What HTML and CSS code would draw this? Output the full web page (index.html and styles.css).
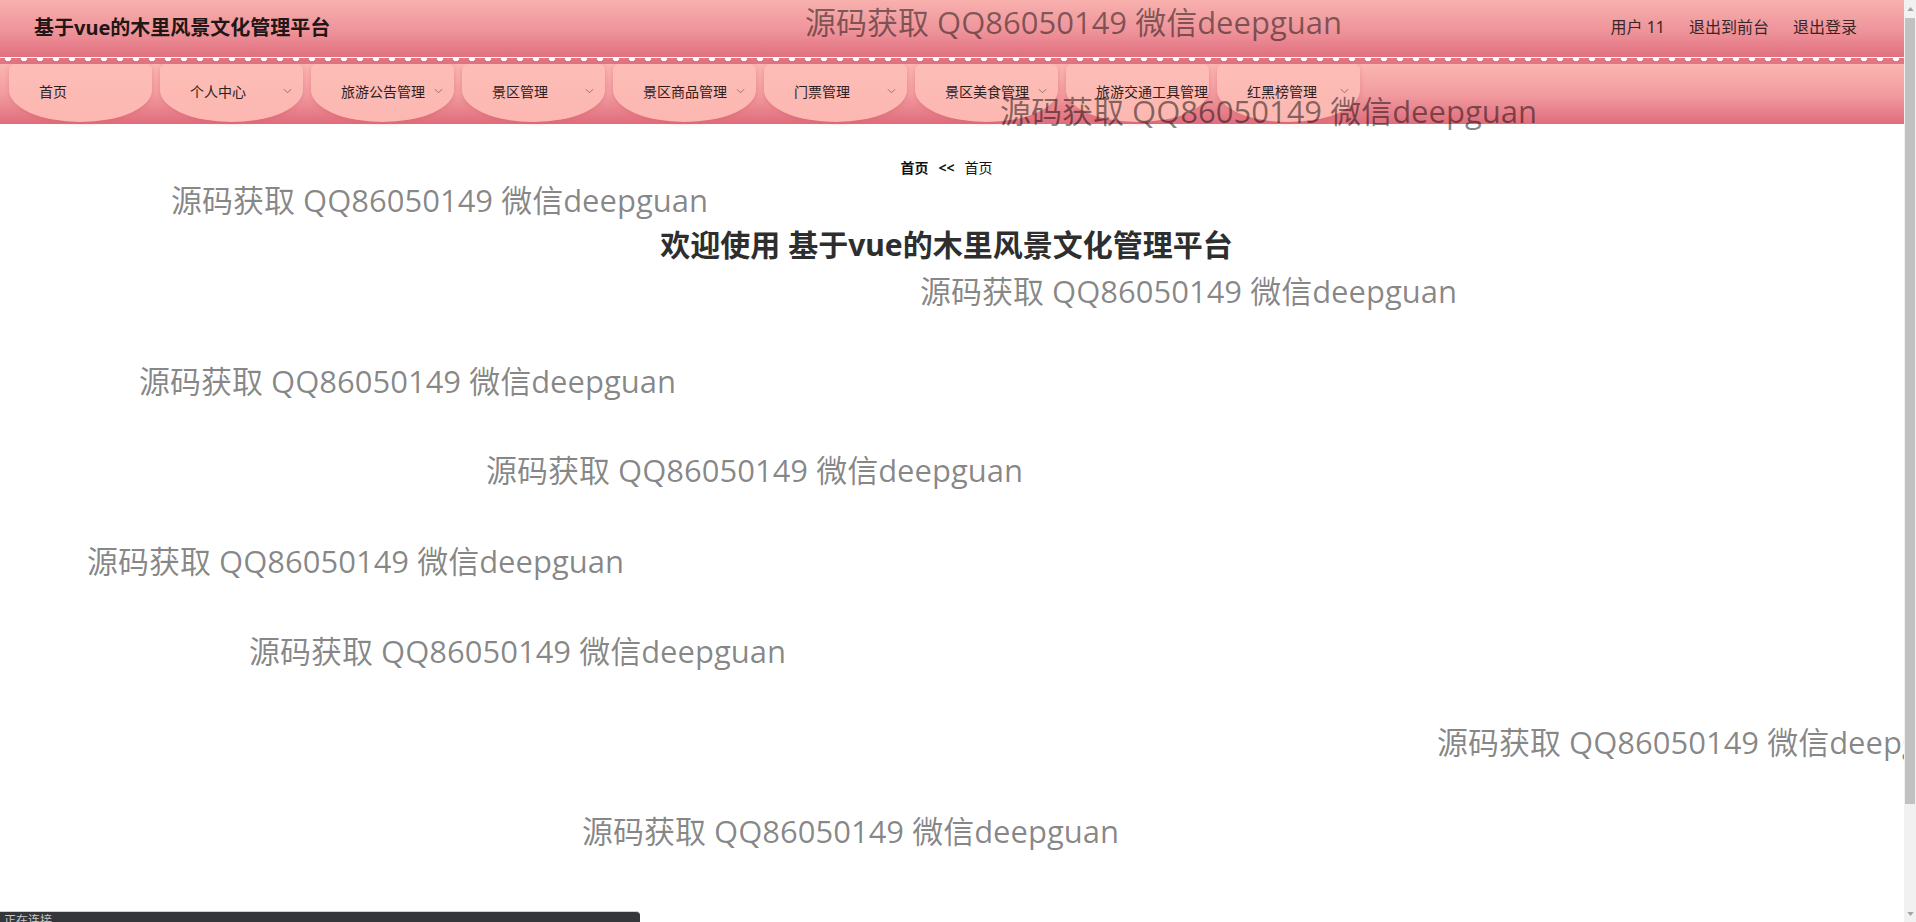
FILE: index.html
```html
<!DOCTYPE html>
<html lang="zh-CN">
<head>
<meta charset="utf-8">
<title>基于vue的木里风景文化管理平台</title>
<link rel="stylesheet" href="styles.css">
</head>
<body>
<div class="page">
  <header class="topbar">
    <div class="brand">基于vue的木里风景文化管理平台</div>
    <nav class="user-links">
      <span class="user-link">用户 11</span>
      <span class="user-link">退出到前台</span>
      <span class="user-link">退出登录</span>
    </nav>
  </header>
  <div class="lace"></div>
  <nav class="menu">
    <div class="tab"><span class="tab-label">首页</span></div>
    <div class="tab"><span class="tab-label">个人中心</span><svg class="chev" viewBox="0 0 10 6"><polyline points="1,1 5,5 9,1"/></svg></div>
    <div class="tab"><span class="tab-label">旅游公告管理</span><svg class="chev" viewBox="0 0 10 6"><polyline points="1,1 5,5 9,1"/></svg></div>
    <div class="tab"><span class="tab-label">景区管理</span><svg class="chev" viewBox="0 0 10 6"><polyline points="1,1 5,5 9,1"/></svg></div>
    <div class="tab"><span class="tab-label">景区商品管理</span><svg class="chev" viewBox="0 0 10 6"><polyline points="1,1 5,5 9,1"/></svg></div>
    <div class="tab"><span class="tab-label">门票管理</span><svg class="chev" viewBox="0 0 10 6"><polyline points="1,1 5,5 9,1"/></svg></div>
    <div class="tab"><span class="tab-label">景区美食管理</span><svg class="chev" viewBox="0 0 10 6"><polyline points="1,1 5,5 9,1"/></svg></div>
    <div class="tab"><span class="tab-label">旅游交通工具管理</span></div>
    <div class="tab"><span class="tab-label">红黑榜管理</span><svg class="chev" viewBox="0 0 10 6"><polyline points="1,1 5,5 9,1"/></svg></div>
  </nav>
  <main class="content">
    <div class="breadcrumb">
      <span class="crumb crumb-strong">首页</span>
      <span class="crumb-sep">&lt;&lt;</span>
      <span class="crumb">首页</span>
    </div>
    <h1 class="welcome">欢迎使用 基于vue的木里风景文化管理平台</h1>
  </main>

  <div class="watermarks">
    <div class="wm wm-1">源码获取 QQ86050149 微信deepguan</div>
    <div class="wm wm-2">源码获取 QQ86050149 微信deepguan</div>
    <div class="wm wm-3">源码获取 QQ86050149 微信deepguan</div>
    <div class="wm wm-4">源码获取 QQ86050149 微信deepguan</div>
    <div class="wm wm-5">源码获取 QQ86050149 微信deepguan</div>
    <div class="wm wm-6">源码获取 QQ86050149 微信deepguan</div>
    <div class="wm wm-7">源码获取 QQ86050149 微信deepguan</div>
    <div class="wm wm-8">源码获取 QQ86050149 微信deepguan</div>
    <div class="wm wm-9">源码获取 QQ86050149 微信deepguan</div>
    <div class="wm wm-10">源码获取 QQ86050149 微信deepguan</div>
  </div>

  <div class="status-bubble">正在连接...</div>
</div>
<div class="scrollbar">
  <div class="sb-btn sb-up"><svg viewBox="0 0 8 5"><polygon points="0,5 4,0 8,5"/></svg></div>
  <div class="sb-thumb"></div>
  <div class="sb-track"></div>
  <div class="sb-btn sb-down"><svg viewBox="0 0 8 5"><polygon points="0,0 8,0 4,5"/></svg></div>
</div>
</body>
</html>
```
FILE: styles.css
```css
body {
  margin: 0;
  display: flex;
  height: 922px;
  overflow: hidden;
  font-family: "Noto Sans", "Noto Sans CJK SC", sans-serif;
  color: #333;
  background: #fff;
}

.page {
  position: relative;
  flex: 1;
  min-width: 0;
  height: 922px;
  overflow: hidden;
}

/* ---------- fake browser scrollbar ---------- */
.scrollbar {
  width: 12px;
  height: 922px;
  display: flex;
  flex-direction: column;
  background: #f1f1f1;
}
.sb-btn {
  height: 17px;
  display: flex;
  align-items: center;
  justify-content: center;
  background: #f1f1f1;
}
.sb-btn svg {
  width: 7px;
  height: 4px;
  fill: #a3a3a3;
}
.sb-thumb {
  height: 786px;
  margin: 1px 1px 0;
  background: #c1c1c1;
}
.sb-track {
  flex: 1;
}

/* ---------- top bar ---------- */
.topbar {
  height: 57px;
  box-sizing: border-box;
  display: flex;
  align-items: center;
  justify-content: space-between;
  padding: 0 47px 5px 34px;
  background: linear-gradient(180deg, #f8b1ad 0%, #ee939a 55%, #e0707f 100%);
}
.brand {
  font-size: 20px;
  font-weight: 700;
  color: #221616;
}
.user-links {
  display: flex;
  gap: 24px;
  font-size: 16px;
  color: #3a2628;
}

/* ---------- lace strip ---------- */
.lace {
  height: 7px;
  background:
    radial-gradient(circle at 50% 0%, #fff 0 3px, transparent 3.5px) 0 1px / 16px 7px repeat-x,
    linear-gradient(180deg, #ffffff 0 1px, #e07583 1px 100%);
}

/* ---------- menu ---------- */
.menu {
  height: 60px;
  display: flex;
  gap: 8px;
  padding-left: 9px;
  background: linear-gradient(180deg, #fbb6b1 0%, #f29ca0 50%, #e06c7b 100%);
}
.tab {
  width: 143px;
  height: 58px;
  flex: none;
  box-sizing: border-box;
  display: flex;
  align-items: center;
  justify-content: space-between;
  padding: 0 11px 2px 30px;
  background: linear-gradient(180deg, #fdbdb6 0%, #fcb7b1 100%);
  border-radius: 6px 6px 50% 50% / 6px 6px 55% 55%;
  box-shadow: 0 1px 4px rgba(205, 85, 100, 0.35);
  font-size: 14px;
  color: #2d2020;
  white-space: nowrap;
}
.tab-label {
  line-height: 20px;
}
.chev {
  width: 9px;
  height: 6px;
  flex: none;
  margin-top: -3px;
  fill: none;
  stroke: #8a6a6c;
  stroke-width: 1;
}

/* ---------- content ---------- */
.content {
  display: flex;
  flex-direction: column;
  align-items: center;
  padding: 35px 11px 0 0;
}
.breadcrumb {
  display: flex;
  align-items: center;
  font-size: 14px;
  color: #111;
  line-height: 18px;
}
.crumb-strong {
  font-weight: 700;
}
.crumb-sep {
  font-weight: 700;
  margin: 0 10px;
}
.welcome {
  margin: 48px 0 0;
  font-size: 30px;
  font-weight: 700;
  color: #2e2e2e;
  line-height: 40px;
}

/* ---------- watermarks ---------- */
.watermarks {
  position: absolute;
  inset: 0;
  pointer-events: none;
}
.wm {
  position: absolute;
  font-family: "Open Sans", "Noto Sans CJK SC", sans-serif;
  font-size: 31px;
  line-height: 36px;
  color: rgba(0, 0, 0, 0.48);
  white-space: nowrap;
}
.wm-1 { left: 805px; top: 4px; }
.wm-2 { left: 1000px; top: 93px; }
.wm-3 { left: 171px; top: 182px; }
.wm-4 { left: 920px; top: 273px; }
.wm-5 { left: 139px; top: 363px; }
.wm-6 { left: 486px; top: 452px; }
.wm-7 { left: 87px; top: 543px; }
.wm-8 { left: 249px; top: 633px; }
.wm-9 { left: 1437px; top: 724px; }
.wm-10 { left: 582px; top: 813px; }

/* ---------- browser status bubble ---------- */
.status-bubble {
  position: absolute;
  left: 0;
  bottom: -11px;
  width: 636px;
  height: 21px;
  padding-left: 4px;
  background: #35363a;
  border-top-right-radius: 4px;
  border-top: 1px solid #d0d0d0;
  color: #c8c8c8;
  font-size: 12px;
  line-height: 18px;
}
```
